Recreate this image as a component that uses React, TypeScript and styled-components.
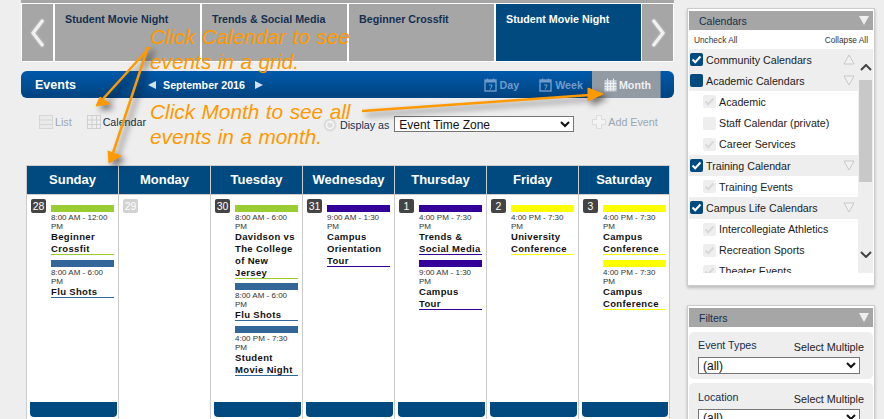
import styled, { createGlobalStyle } from "styled-components";

const GlobalStyle = createGlobalStyle`
  html, body {
    margin: 0;
    height: 419px;
    overflow: hidden;
    background: #eeeeee;
    font-family: "Liberation Sans", Arial, sans-serif;
  }
  * {
    box-sizing: border-box;
  }
`;

const Page = styled.div`
  position: relative;
  display: flex;
  width: 884px;
  height: 419px;
  overflow: hidden;
  padding-left: 21px;
`;

const Main = styled.main`
  width: 653px;
`;

const Carousel = styled.div`
  display: flex;
  gap: 2px;
  height: 62px;
  padding: 1px;
  border-top: 3px solid #a6a6a6;
  background: #fff;
  margin-bottom: 9px;
`;

const CarouselArrow = styled.div<{ $right?: boolean }>`
  width: 31px;
  display: flex;
  align-items: center;
  justify-content: center;
  background: #a6a6a6;
  margin-left: ${(p) => (p.$right ? "-1px" : "0")};
  svg {
    filter: drop-shadow(0 0 1px rgba(255, 255, 255, 0.6));
  }
`;

const Tile = styled.div<{ $active?: boolean }>`
  width: 145px;
  padding: 9px 10px;
  font-size: 10.7px;
  line-height: 12px;
  font-weight: bold;
  background: ${(p) => (p.$active ? "#004a80" : "#a6a6a6")};
  color: ${(p) => (p.$active ? "#fff" : "#14304f")};
`;

const EventsBar = styled.div`
  display: flex;
  align-items: center;
  height: 27px;
  padding: 0 13px 0 14px;
  border-radius: 6px;
  background: linear-gradient(#005aab, #00437f);
  color: #fff;
`;

const BarTitle = styled.div`
  width: 113px;
  font-size: 12.5px;
  font-weight: bold;
`;

const MonthNav = styled.div`
  display: flex;
  align-items: center;
  font-size: 10.7px;
  font-weight: bold;
  span {
    margin: 0 10px 0 7px;
  }
`;

const Triangle = styled.i<{ $right?: boolean }>`
  width: 0;
  height: 0;
  border-top: 4px solid transparent;
  border-bottom: 4px solid transparent;
  border-left: ${(p) => (p.$right ? "8px solid #d3e0ee" : "none")};
  border-right: ${(p) => (p.$right ? "none" : "8px solid #d3e0ee")};
`;

const RangeTabs = styled.div`
  display: flex;
  align-items: stretch;
  height: 27px;
  margin-left: auto;
`;

const RangeTab = styled.div<{ $active?: boolean }>`
  display: flex;
  align-items: center;
  gap: ${(p) => (p.$active ? 2 : 3)}px;
  font-size: 10.7px;
  font-weight: bold;
  padding: ${(p) => (p.$active ? "0 9px 0 12px" : "0 9px 0 11px")};
  background: ${(p) => (p.$active ? "#929aa3" : "transparent")};
  border-right: ${(p) => (p.$active ? "1px solid #567a9c" : "none")};
  color: ${(p) => (p.$active ? "#eef1f4" : "#6f9ccb")};
`;

const Toolbar = styled.div`
  display: flex;
  align-items: flex-start;
  height: 67px;
  padding: 16px 0 0 18px;
  font-size: 10.7px;
`;

const ViewLink = styled.div<{ $on?: boolean; $gap?: number }>`
  display: flex;
  align-items: center;
  gap: 2px;
  height: 16px;
  margin-left: ${(p) => p.$gap ?? 0}px;
  color: ${(p) => (p.$on ? "#14304f" : "#9aa6b2")};
`;

const DisplayLabel = styled.label`
  display: flex;
  align-items: center;
  gap: 3px;
  height: 16px;
  margin: 3px 0 0 177px;
  color: #14304f;
`;

const ZoneSelect = styled.select`
  width: 180px;
  height: 16px;
  margin: 2px 0 0 5px;
  padding: 0;
  border: 1px solid #767676;
  border-radius: 0;
  background: #fff;
  font-family: "Liberation Sans", Arial, sans-serif;
  font-size: 12px;
  color: #111;
`;

const CalendarGrid = styled.div`
  display: grid;
  grid-template-columns: repeat(7, 92px);
  width: 644px;
  height: 254px;
  margin-left: 5px;
  border-top: 1px solid #ccc;
`;

const DayColumn = styled.section<{ $last?: boolean }>`
  display: flex;
  flex-direction: column;
  border-left: 1px solid #ccc;
  border-right: ${(p) => (p.$last ? "1px solid #ccc" : "none")};
  background: #fff;
`;

const DayHead = styled.header`
  height: 29px;
  line-height: 28px;
  text-align: center;
  font-size: 13px;
  font-weight: bold;
  color: #fff;
  background: #004a80;
  border-bottom: 1px solid #ccc;
`;

const DayBody = styled.div`
  display: flex;
  gap: 5px;
  flex: 1;
  padding: 4px 0 0 4px;
`;

const DateBadge = styled.div<{ $muted?: boolean }>`
  flex: none;
  width: 15px;
  height: 14px;
  line-height: 14px;
  text-align: center;
  font-size: 10.5px;
  border-radius: 2px;
  color: #fff;
  background: ${(p) => (p.$muted ? "#d2d2d2" : "#444")};
`;

const EventStack = styled.div`
  width: 63px;
  padding-top: 6px;
`;

const EventCard = styled.article<{ $after?: number }>`
  margin-bottom: ${(p) => p.$after ?? 5}px;
`;

const EventBar = styled.div<{ $color: string }>`
  height: 7px;
  background: ${(p) => p.$color};
`;

const EventTime = styled.div`
  height: 18px;
  padding-top: 1px;
  font-size: 8px;
  line-height: 9px;
  color: #333;
`;

const EventTitle = styled.div<{ $color: string }>`
  padding-top: 1px;
  font-size: 9.5px;
  line-height: 12px;
  letter-spacing: 0.35px;
  font-weight: bold;
  color: #111;
  &::after {
    content: "";
    display: block;
    height: 1px;
    margin-top: -1px;
    background: ${(p) => p.$color};
  }
`;

const MoreBar = styled.div`
  height: 15px;
  margin: 0 1px 2px 3px;
  border-radius: 0 0 4px 4px;
  background: #004a80;
`;

const Sidebar = styled.aside`
  width: 188px;
  margin: 8px 0 0 13px;
`;

const Panel = styled.div<{ $height: number; $gap?: number }>`
  height: ${(p) => p.$height}px;
  margin-top: ${(p) => p.$gap ?? 0}px;
  padding: 2px 1px;
  background: #fff;
  border: 1px solid #ccc;
  box-shadow: 0 2px 3px rgba(0, 0, 0, 0.22);
`;

const PanelHead = styled.div`
  display: flex;
  align-items: center;
  justify-content: space-between;
  height: 19px;
  padding: 0 4px 0 10px;
  font-size: 10.5px;
  color: #14304f;
  background: #a6a6a6;
`;

const BulkRow = styled.div`
  display: flex;
  justify-content: space-between;
  align-items: center;
  height: 19px;
  padding: 0 5px;
  font-size: 8.3px;
  color: #333;
`;

const CheckScroller = styled.div`
  display: flex;
  height: 224px;
`;

const CheckList = styled.div`
  width: 169px;
  overflow: hidden;
`;

const CheckRow = styled.div<{ $parent?: boolean }>`
  display: flex;
  align-items: center;
  gap: 3px;
  height: 21.2px;
  padding: 0 3px 0 ${(p) => (p.$parent ? 1 : 14)}px;
  font-size: 10.7px;
  white-space: nowrap;
  color: #1c1c1c;
  background: ${(p) => (p.$parent ? "#eee" : "#fff")};
`;

const CheckBox = styled.span<{ $parent?: boolean }>`
  display: flex;
  align-items: center;
  justify-content: center;
  flex: none;
  width: 13px;
  height: 13px;
  border-radius: 2px;
  background: ${(p) => (p.$parent ? "#004a80" : "#eee")};
`;

const RowTriangle = styled.svg`
  margin-left: auto;
`;

const Scrollbar = styled.div`
  display: flex;
  flex-direction: column;
  width: 15px;
  background: #eee;
`;

const ScrollEnd = styled.div<{ $down?: boolean }>`
  display: flex;
  justify-content: center;
  align-items: ${(p) => (p.$down ? "flex-end" : "flex-start")};
  flex: ${(p) => (p.$down ? 1 : "none")};
  height: ${(p) => (p.$down ? "auto" : "31px")};
  padding: ${(p) => (p.$down ? "0 0 15px" : "15px 0 0")};
`;

const ScrollThumb = styled.div`
  height: 102px;
  margin: 0 1px;
  background: #c8c8c8;
`;

const FilterBox = styled.div`
  margin-top: 5px;
  height: 47px;
  padding: 7px 9px 0;
  border-radius: 5px;
  background: #eee;
  & + & {
    margin-top: 4px;
    padding-top: 8px;
  }
`;

const FilterLabels = styled.div`
  display: flex;
  justify-content: space-between;
  height: 18px;
  font-size: 10.7px;
  color: #14304f;
  b {
    font-weight: normal;
    margin-top: 2px;
    color: #222;
    font-size: 10.8px;
  }
`;

const FilterSelect = styled.select`
  display: block;
  width: 162px;
  height: 17px;
  padding: 0;
  border: 1px solid #767676;
  border-radius: 0;
  background: #fff;
  font-family: "Liberation Sans", Arial, sans-serif;
  font-size: 12px;
  color: #111;
`;

const Callout = styled.div<{ $top: number }>`
  position: absolute;
  left: 150px;
  top: ${(p) => p.$top}px;
  font-size: 20.8px;
  line-height: 25px;
  word-spacing: 0.7px;
  font-style: italic;
  color: #ff9900;
  white-space: nowrap;
`;

const ArrowLayer = styled.svg`
  position: absolute;
  left: 0;
  top: 0;
  filter: drop-shadow(4px 4px 3px rgba(0, 0, 0, 0.55));
`;

const Chevron = ({ right }: { right?: boolean }) => (
  <svg width="16" height="30" viewBox="0 0 16 30">
    <polyline
      points={right ? "3,2 13,15 3,28" : "13,2 3,15 13,28"}
      fill="none"
      stroke="#f2f2f2"
      strokeWidth="3"
    />
  </svg>
);

const SmallCalendar = ({ color }: { color: string }) => (
  <svg width="13" height="14" viewBox="0 0 13 14">
    <rect x="1" y="2" width="11" height="11" fill="none" stroke={color} strokeWidth="1.4" />
    <rect x="1" y="2" width="11" height="2.5" fill={color} />
    <path d="M3.5 0.5v2M9.5 0.5v2" stroke={color} strokeWidth="1.4" />
    <path d="M5 7h3.2L6.2 11.5" fill="none" stroke={color} strokeWidth="1" />
  </svg>
);

const MonthGridIcon = () => (
  <svg width="13" height="14" viewBox="0 0 13 14">
    <rect x="0.5" y="2" width="12" height="11.5" fill="#c5cad0" />
    <path
      d="M3.5 0.5v2M9.5 0.5v2M0.5 5.5h12M0.5 8.5h12M0.5 11h12M3.5 3v10M6.5 3v10M9.5 3v10"
      stroke="#eef1f4"
      strokeWidth="1"
    />
  </svg>
);

const ListIcon = () => (
  <svg width="14" height="14" viewBox="0 0 14 14">
    <rect x="0.5" y="0.5" width="13" height="13" fill="#eaeaea" stroke="#d6d6d6" />
    <path d="M1 5h12M1 9.5h12" stroke="#d6d6d6" />
  </svg>
);

const GridIcon = () => (
  <svg width="14" height="14" viewBox="0 0 14 14">
    <rect x="0.5" y="0.5" width="13" height="13" fill="#efefef" stroke="#cfcfcf" />
    <path d="M5 1v12M9.5 1v12M1 5h12M1 9.5h12" stroke="#cfcfcf" />
  </svg>
);

const RefreshIcon = () => (
  <svg width="14" height="14" viewBox="0 0 14 14">
    <circle cx="7" cy="7" r="6.5" fill="#dcdcdc" />
    <circle cx="7" cy="7" r="3.5" fill="none" stroke="#f7f7f7" strokeWidth="1.5" />
    <path d="M7 2.5l3 1.8-3 1.4z" fill="#f7f7f7" />
  </svg>
);

const PlusIcon = () => (
  <svg width="14" height="14" viewBox="0 0 14 14">
    <path d="M4.5 0.5h5v4h4v5h-4v4h-5v-4h-4v-5h4z" fill="#f4f4f4" stroke="#dcdcdc" />
  </svg>
);

const Tick = ({ color }: { color: string }) => (
  <svg width="11" height="9" viewBox="0 0 11 9">
    <path d="M1.5 4.5L4.2 7.2 9.5 1.5" fill="none" stroke={color} strokeWidth="2" />
  </svg>
);

const OutlineTriangle = ({ up }: { up?: boolean }) => (
  <RowTriangle width="12" height="11" viewBox="0 0 12 11">
    <polygon
      points={up ? "6,1 11,10 1,10" : "1,1 11,1 6,10"}
      fill="#f2f2f2"
      stroke="#c8c8c8"
    />
  </RowTriangle>
);

const HeadTriangle = () => (
  <svg width="10" height="9" viewBox="0 0 10 9">
    <polygon points="0,0 10,0 5,9" fill="#eeeeee" />
  </svg>
);

const ScrollChevron = ({ down }: { down?: boolean }) => (
  <svg width="12" height="7" viewBox="0 0 12 7">
    <polyline
      points={down ? "1,1 6,6 11,1" : "1,6 6,1 11,6"}
      fill="none"
      stroke="#444"
      strokeWidth="2"
    />
  </svg>
);

const GREEN = "#9acd32";
const BLUE = "#336699";
const PURPLE = "#330099";
const YELLOW = "#ffff00";

type CalEvent = {
  color: string;
  time: string;
  title: string;
  after?: number;
};

type Day = {
  name: string;
  date: number;
  muted?: boolean;
  events: CalEvent[];
};

const days: Day[] = [
  {
    name: "Sunday",
    date: 28,
    events: [
      { color: GREEN, time: "8:00 AM - 12:00 PM", title: "Beginner Crossfit" },
      { color: BLUE, time: "8:00 AM - 6:00 PM", title: "Flu Shots" },
    ],
  },
  { name: "Monday", date: 29, muted: true, events: [] },
  {
    name: "Tuesday",
    date: 30,
    events: [
      {
        color: GREEN,
        time: "8:00 AM - 6:00 PM",
        title: "Davidson vs The College of New Jersey",
        after: 4,
      },
      { color: BLUE, time: "8:00 AM - 6:00 PM", title: "Flu Shots" },
      { color: BLUE, time: "4:00 PM - 7:30 PM", title: "Student Movie Night" },
    ],
  },
  {
    name: "Wednesday",
    date: 31,
    events: [{ color: PURPLE, time: "9:00 AM - 1:30 PM", title: "Campus Orientation Tour" }],
  },
  {
    name: "Thursday",
    date: 1,
    events: [
      { color: PURPLE, time: "4:00 PM - 7:30 PM", title: "Trends & Social Media" },
      { color: PURPLE, time: "9:00 AM - 1:30 PM", title: "Campus Tour" },
    ],
  },
  {
    name: "Friday",
    date: 2,
    events: [{ color: YELLOW, time: "4:00 PM - 7:30 PM", title: "University Conference" }],
  },
  {
    name: "Saturday",
    date: 3,
    events: [
      { color: YELLOW, time: "4:00 PM - 7:30 PM", title: "Campus Conference" },
      { color: YELLOW, time: "4:00 PM - 7:30 PM", title: "Campus Conference" },
    ],
  },
];

type CheckItem = {
  label: string;
  parent?: boolean;
  off?: boolean;
  up?: boolean;
};

const calendars: CheckItem[] = [
  { label: "Community Calendars", parent: true, up: true },
  { label: "Academic Calendars", parent: true, off: true },
  { label: "Academic" },
  { label: "Staff Calendar (private)", off: true },
  { label: "Career Services" },
  { label: "Training Calendar", parent: true },
  { label: "Training Events" },
  { label: "Campus Life Calendars", parent: true },
  { label: "Intercollegiate Athletics" },
  { label: "Recreation Sports" },
  { label: "Theater Events" },
];

export default function App() {
  return (
    <Page>
      <GlobalStyle />
      <Main>
        <Carousel>
          <CarouselArrow>
            <Chevron />
          </CarouselArrow>
          <Tile>Student Movie Night</Tile>
          <Tile>Trends &amp; Social Media</Tile>
          <Tile>Beginner Crossfit</Tile>
          <Tile $active>Student Movie Night</Tile>
          <CarouselArrow $right>
            <Chevron right />
          </CarouselArrow>
        </Carousel>

        <EventsBar>
          <BarTitle>Events</BarTitle>
          <MonthNav>
            <Triangle />
            <span>September 2016</span>
            <Triangle $right />
          </MonthNav>
          <RangeTabs>
            <RangeTab>
              <SmallCalendar color="#6f9ccb" />
              Day
            </RangeTab>
            <RangeTab>
              <SmallCalendar color="#6f9ccb" />
              Week
            </RangeTab>
            <RangeTab $active>
              <MonthGridIcon />
              Month
            </RangeTab>
          </RangeTabs>
        </EventsBar>

        <Toolbar>
          <ViewLink>
            <ListIcon />
            List
          </ViewLink>
          <ViewLink $on $gap={15}>
            <GridIcon />
            Calendar
          </ViewLink>
          <DisplayLabel>
            <RefreshIcon />
            Display as
          </DisplayLabel>
          <ZoneSelect defaultValue="event">
            <option value="event">Event Time Zone</option>
          </ZoneSelect>
          <ViewLink $gap={18}>
            <PlusIcon />
            Add Event
          </ViewLink>
        </Toolbar>

        <CalendarGrid>
          {days.map((day, i) => (
            <DayColumn key={day.name} $last={i === days.length - 1}>
              <DayHead>{day.name}</DayHead>
              <DayBody>
                <DateBadge $muted={day.muted}>{day.date}</DateBadge>
                <EventStack>
                  {day.events.map((ev, j) => (
                    <EventCard key={j} $after={ev.after}>
                      <EventBar $color={ev.color} />
                      <EventTime>{ev.time}</EventTime>
                      <EventTitle $color={ev.color}>{ev.title}</EventTitle>
                    </EventCard>
                  ))}
                </EventStack>
              </DayBody>
              {!day.muted && <MoreBar />}
            </DayColumn>
          ))}
        </CalendarGrid>
      </Main>

      <Sidebar>
        <Panel $height={278}>
          <PanelHead>
            Calendars
            <HeadTriangle />
          </PanelHead>
          <BulkRow>
            <span>Uncheck All</span>
            <span>Collapse All</span>
          </BulkRow>
          <CheckScroller>
            <CheckList>
              {calendars.map((item) => (
                <CheckRow key={item.label} $parent={item.parent}>
                  <CheckBox $parent={item.parent}>
                    {!item.off && <Tick color={item.parent ? "#fff" : "#d8d8d8"} />}
                  </CheckBox>
                  {item.label}
                  {item.parent && <OutlineTriangle up={item.up} />}
                </CheckRow>
              ))}
            </CheckList>
            <Scrollbar>
              <ScrollEnd>
                <ScrollChevron />
              </ScrollEnd>
              <ScrollThumb />
              <ScrollEnd $down>
                <ScrollChevron down />
              </ScrollEnd>
            </Scrollbar>
          </CheckScroller>
        </Panel>

        <Panel $height={140} $gap={19}>
          <PanelHead>
            Filters
            <HeadTriangle />
          </PanelHead>
          <FilterBox>
            <FilterLabels>
              Event Types
              <b>Select Multiple</b>
            </FilterLabels>
            <FilterSelect defaultValue="all">
              <option value="all">(all)</option>
            </FilterSelect>
          </FilterBox>
          <FilterBox>
            <FilterLabels>
              Location
              <b>Select Multiple</b>
            </FilterLabels>
            <FilterSelect defaultValue="all">
              <option value="all">(all)</option>
            </FilterSelect>
          </FilterBox>
        </Panel>
      </Sidebar>

      <ArrowLayer width="884" height="419" viewBox="0 0 884 419">
        <g fill="#ff9900" stroke="#ff9900" strokeLinejoin="round">
          <line x1="150" y1="47" x2="102" y2="100" strokeWidth="2.5" />
          <polygon points="96,106 100,97 110,104" strokeWidth="1" />
          <line x1="148" y1="47" x2="113" y2="153" strokeWidth="2.5" />
          <polygon points="109,163 108,151 121,156" strokeWidth="1" />
          <line x1="362" y1="111" x2="590" y2="95" strokeWidth="2.5" />
          <polygon points="603,94 588,88 588,101" strokeWidth="1" />
        </g>
      </ArrowLayer>
      <Callout $top={24}>
        Click Calendar to see
        <br />
        events in a grid.
      </Callout>
      <Callout $top={99}>
        Click Month to see all
        <br />
        events in a month.
      </Callout>
    </Page>
  );
}
